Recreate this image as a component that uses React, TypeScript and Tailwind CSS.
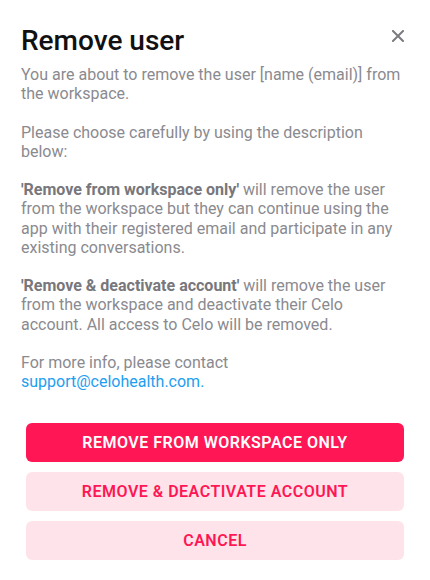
import React from "react";

const font = { fontFamily: "Roboto, 'Noto Sans', Arial, sans-serif" };

export default function App() {
  return (
    <div className="w-[430px] h-[580px] bg-white relative" style={font}>
      {/* close button */}
      <button className="absolute right-[25px] top-[29px] w-[14px] h-[14px] flex items-center justify-center text-[#7b7b80]">
        <svg width="12" height="12" viewBox="0 0 12 12" fill="none">
          <path d="M1 1L11 11M11 1L1 11" stroke="currentColor" strokeWidth="2" strokeLinecap="square" />
        </svg>
      </button>

      <div className="pl-[21px] pr-[29px] pt-[25px]">
        <h1 className="text-[28px] leading-[32px] font-medium text-[#111111]">Remove user</h1>

        <div className="mt-[8px] text-[16px] leading-[19.2px] text-[#8a8a8f] flex flex-col gap-[19.2px]">
          <p>You are about to remove the user [name (email)] from the workspace.</p>
          <p>Please choose carefully by using the description below:</p>
          <p>
            <span className="font-bold text-[#77777c]">'Remove from workspace only'</span> will remove the user
            from the workspace but they can continue using the app with their registered email and participate in any
            existing conversations.
          </p>
          <p>
            <span className="font-bold text-[#77777c]">'Remove &amp; deactivate account'</span> will remove the user
            from the workspace and deactivate their Celo account. All access to Celo will be removed.
          </p>
          <p>
            For more info, please contact
            <br />
            <a className="text-[#1e9ef0]">support@celohealth.com.</a>
          </p>
        </div>
      </div>

      <div className="mt-[32px] px-[26px] flex flex-col gap-[10px]">
        <button className="h-[39px] rounded-[6px] bg-[#ff1654] text-white text-[16px] font-semibold tracking-[0.5px] uppercase">
          Remove from workspace only
        </button>
        <button className="h-[39px] rounded-[6px] bg-[#ffe3ea] text-[#ff1654] text-[16px] font-semibold tracking-[0.5px] uppercase">
          Remove &amp; deactivate account
        </button>
        <button className="h-[39px] rounded-[6px] bg-[#ffe3ea] text-[#ff1654] text-[16px] font-semibold tracking-[0.5px] uppercase">
          Cancel
        </button>
      </div>
    </div>
  );
}
